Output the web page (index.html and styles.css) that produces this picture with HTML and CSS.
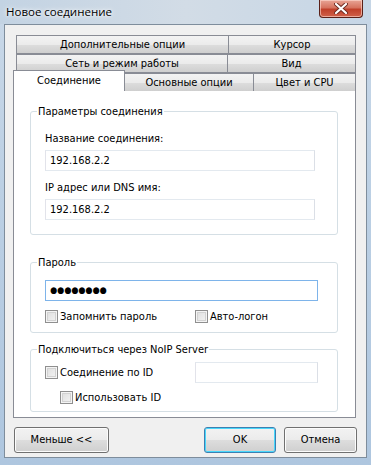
FILE: index.html
```html
<!DOCTYPE html>
<html lang="ru">
<head>
    <meta charset="UTF-8">
    <title>Новое соединение</title>
    <link rel="stylesheet" href="styles.css">
</head>
<body>

<div class="window">
    <!-- Title bar -->
    <div class="titlebar">
        <span class="title">Новое соединение</span>
        <div class="close-btn">
            <svg width="14" height="11" viewBox="0 0 14 11">
                <path d="M2 1 L12 10 M12 1 L2 10" stroke="#6d2a20" stroke-width="4" stroke-linecap="round"/>
                <path d="M2 1 L12 10 M12 1 L2 10" stroke="#ffffff" stroke-width="2.2" stroke-linecap="round"/>
            </svg>
        </div>
    </div>

    <div class="client">
        <!-- Tabs -->
        <div class="tabs">
            <div class="tab-row row1">
                <div class="tab w212">Дополнительные опции</div>
                <div class="tab grow">Курсор</div>
            </div>
            <div class="tab-row row2">
                <div class="tab w211">Сеть и режим работы</div>
                <div class="tab grow">Вид</div>
            </div>
            <div class="tab-row row3">
                <div class="tab selected">Соединение</div>
                <div class="tab w129">Основные опции</div>
                <div class="tab grow">Цвет и CPU</div>
            </div>
        </div>

        <div class="pane">
            <fieldset class="group g1">
                <legend>Параметры соединения</legend>
                <div class="field-label">Название соединения:</div>
                <div class="textbox">192.168.2.2</div>
                <div class="field-label">IP адрес или DNS имя:</div>
                <div class="textbox">192.168.2.2</div>
            </fieldset>

            <fieldset class="group g2">
                <legend>Пароль</legend>
                <div class="textbox focused password">●●●●●●●●</div>
                <div class="check-row">
                    <label class="check w150"><span class="box"></span>Запомнить пароль</label>
                    <label class="check"><span class="box"></span>Авто-логон</label>
                </div>
            </fieldset>

            <fieldset class="group g3">
                <legend>Подключиться через NoIP Server</legend>
                <div class="check-row id-row">
                    <label class="check w150"><span class="box"></span>Соединение по ID</label>
                    <div class="textbox small"></div>
                </div>
                <label class="check indent"><span class="box"></span>Использовать ID</label>
            </fieldset>
        </div>

        <!-- Bottom buttons -->
        <div class="buttons">
            <div class="btn less">Меньше &lt;&lt;</div>
            <div class="btn ok">OK</div>
            <div class="btn cancel">Отмена</div>
        </div>
    </div>
</div>

</body>
</html>
```

FILE: styles.css
```css
/* Global */
body {
    margin: 0;
    padding: 0;
    font-family: "DejaVu Sans Condensed", "DejaVu Sans", sans-serif;
    font-size: 11px;
    color: #000;
    background: #b9cde2;
}

.window {
    width: 371px;
    height: 465px;
    background: linear-gradient(to bottom, #c9d8e8 0%, #bcd0e4 40%, #aec6df 100%);
    display: flex;
    flex-direction: column;
    overflow: hidden;
}

/* Title bar */
.titlebar {
    height: 24px;
    display: flex;
    align-items: flex-start;
    justify-content: space-between;
    background: linear-gradient(to right, #c3d3e3 0%, #d2dce6 50%, #c6d6e6 100%);
}

.title {
    font-family: "Open Sans", "DejaVu Sans", sans-serif;
    font-size: 11.5px;
    padding: 4px 0 0 6px;
    color: #000;
    text-shadow: 0 0 6px #fff, 0 0 3px #fff;
}

.close-btn {
    width: 42px;
    height: 17px;
    margin-right: 8px;
    border: 1px solid #5a2018;
    border-top: none;
    border-radius: 0 0 4px 4px;
    background: linear-gradient(to bottom, #e8a596 0%, #d6735f 45%, #c0402a 55%, #d0614a 100%);
    box-shadow: inset 0 0 0 1px rgba(255, 220, 210, 0.6);
    display: flex;
    align-items: center;
    justify-content: center;
}

/* Client area */
.client {
    margin: 0 4px 5px 4px;
    height: 434px;
    background: #f0f0f0;
    border: 1px solid #7e8d9c;
    padding: 10px 0 0 8px;
    box-sizing: border-box;
}

/* Tabs */
.tabs {
    width: 342px;
}

.tab-row {
    display: flex;
    height: 18px;
    margin-left: 3px;
}

.row2 {
    margin-top: 1px;
}

.row3 {
    margin-left: 0;
    margin-top: 0;
}

.tab {
    height: 18px;
    box-sizing: border-box;
    border: 1px solid #898c95;
    border-bottom: none;
    margin-right: -1px;
    background: linear-gradient(to bottom, #f3f3f3 0%, #ebebeb 50%, #dddddd 51%, #cfcfcf 100%);
    text-align: center;
    line-height: 17px;
    white-space: nowrap;
}

.row1 .tab, .row2 .tab {
    border-bottom: 1px solid #898c95;
    height: 19px;
}

.row3 .tab {
    margin-top: 1px;
    line-height: 18px;
}

.grow {
    flex: 1;
}

.w212 { width: 213px; }
.w211 { width: 212px; }
.w129 { width: 130px; }

.tab.selected {
    width: 112px;
    height: 21px;
    margin-top: -2px;
    background: #ffffff;
    border-color: #898c95;
    position: relative;
    z-index: 2;
    line-height: 19px;
}

.pane {
    width: 343px;
    height: 329px;
    box-sizing: border-box;
    border: 1px solid #898c95;
    background: #ffffff;
    padding: 0 0 0 16px;
    margin-top: -1px;
}

/* Group boxes */
.group {
    width: 308px;
    box-sizing: border-box;
    margin: 0;
    border: 1px solid #d5dfe5;
    border-radius: 3px;
    padding: 0 0 0 14px;
}

.group legend {
    padding: 0 1px;
    margin-left: -8px;
    line-height: 13px;
}

.g1 {
    margin-top: 15px;
    height: 130px;
}

.g2 {
    margin-top: 21px;
    height: 77px;
}

.g3 {
    margin-top: 10px;
    height: 69px;
}

.field-label {
    margin-top: 10px;
    height: 14px;
    line-height: 14px;
}

.g1 .field-label:first-of-type {
    margin-top: 14px;
}

.textbox {
    width: 270px;
    height: 21px;
    box-sizing: border-box;
    border: 1px solid #abadb3;
    border-top-color: #e3e9ef;
    border-left-color: #e2e3ea;
    border-right-color: #dbdfe6;
    border-bottom-color: #e3e9ef;
    background: #fff;
    margin-top: 2px;
    padding-left: 4px;
    line-height: 19px;
}

.g1 .field-label + .textbox {
    margin-top: 4px;
}

.textbox.focused {
    width: 273px;
    margin-top: 11px;
    border: 1px solid #7eb4ea;
    font-size: 9px;
    line-height: 19px;
}

.textbox.small {
    width: 123px;
    margin-top: 0;
}

/* Checkboxes */
.check-row {
    display: flex;
    align-items: center;
    margin-top: 8px;
}

.check {
    display: flex;
    align-items: center;
    height: 14px;
}

.w150 {
    width: 150px;
}

.box {
    width: 13px;
    height: 13px;
    box-sizing: border-box;
    border: 1px solid #8f8f8f;
    background: linear-gradient(135deg, #dcdcdc 0%, #f5f5f5 100%);
    box-shadow: inset 0 0 0 1px #f4f4f4, inset 0 0 0 2px #d2d2d2;
    margin-right: 2px;
}

.id-row {
    margin-top: 6px;
    height: 21px;
}

.indent {
    margin-left: 15px;
    margin-top: 7px;
}

/* Buttons */
.buttons {
    display: flex;
    margin-top: 9px;
    margin-left: 1px;
}

.btn {
    height: 26px;
    box-sizing: border-box;
    border: 1px solid #707070;
    border-radius: 3px;
    background: linear-gradient(to bottom, #f2f2f2 0%, #ebebeb 50%, #dddddd 51%, #cfcfcf 100%);
    box-shadow: inset 0 0 0 1px #fcfcfc;
    text-align: center;
    line-height: 24px;
}

.less {
    width: 95px;
}

.ok {
    width: 72px;
    margin-left: 95px;
    border-color: #3c7fb1;
    box-shadow: inset 0 0 0 1px #48d7fb;
}

.cancel {
    width: 73px;
    margin-left: 8px;
}
```
